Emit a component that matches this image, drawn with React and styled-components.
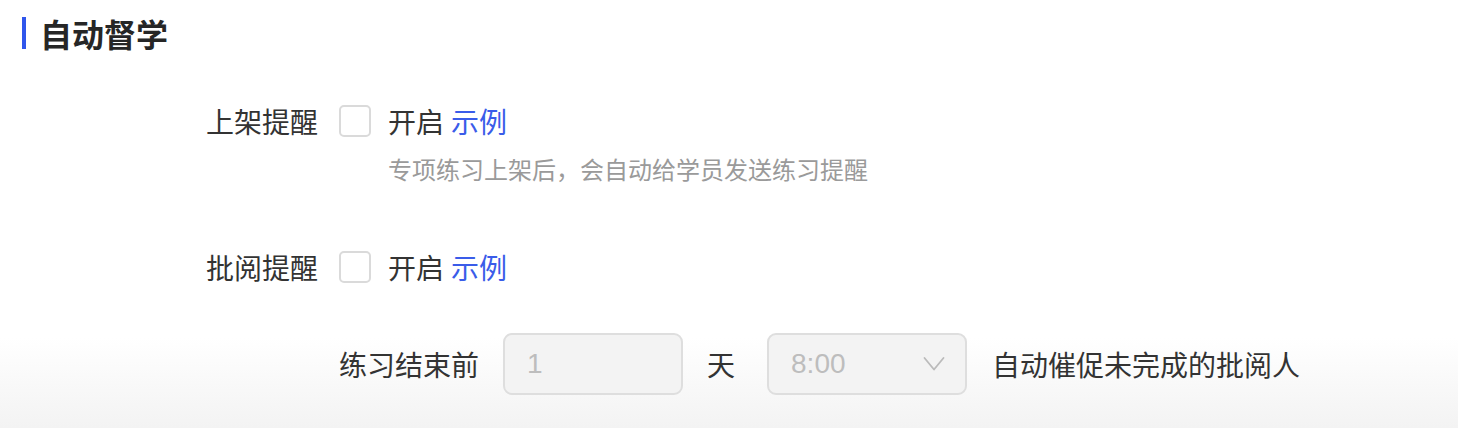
import React from "react";
import styled, { createGlobalStyle } from "styled-components";

const Global = createGlobalStyle`
  html, body { margin: 0; padding: 0; background: #fff; }
  body { font-family: "Noto Sans CJK SC", "Noto Sans", sans-serif; }
`;

const Page = styled.div`
  min-height: 428px;
  box-sizing: border-box;
  padding-top: 17px;
  background: linear-gradient(180deg, #ffffff 0, #ffffff 338px, #f3f3f3 428px);
  color: #333;
`;

const Header = styled.div`
  display: flex;
  align-items: center;
  gap: 14px;
  height: 32px;
  padding-left: 22px;
`;

const Bar = styled.span`
  width: 4px;
  height: 32px;
  background: #3056ec;
`;

const Title = styled.h2`
  margin: 0;
  font-size: 32px;
  font-weight: 700;
  line-height: 32px;
  color: #262626;
`;

const Form = styled.div`
  display: flex;
  flex-direction: column;
`;

const Row = styled.div`
  display: flex;
  align-items: center;
  height: ${(p) => p.$h || 40}px;
  margin-top: ${(p) => p.$mt || 0}px;
  padding-left: ${(p) => p.$indent || 0}px;
`;

const Label = styled.div`
  width: 318px;
  text-align: right;
  font-size: 28px;
  line-height: 40px;
  color: #333;
  flex-shrink: 0;
`;

const Check = styled.span`
  width: 32px;
  height: 32px;
  box-sizing: border-box;
  border: 2px solid #dadada;
  border-radius: 5px;
  background: #fff;
  margin-left: 21px;
  margin-right: 17px;
  flex-shrink: 0;
`;

const Text = styled.span`
  font-size: 28px;
  line-height: 40px;
  color: #333;
  white-space: nowrap;
  margin-right: ${(p) => p.$mr || 0}px;
`;

const Link = styled.a`
  font-size: 28px;
  line-height: 40px;
  color: #3a5ce9;
  text-decoration: none;
  margin-left: 7px;
`;

const Hint = styled.div`
  margin-top: 10px;
  padding-left: 388px;
  font-size: 24px;
  line-height: 36px;
  color: #9a9a9a;
`;

const Field = styled.div`
  display: flex;
  align-items: center;
  justify-content: space-between;
  box-sizing: border-box;
  width: ${(p) => p.$w}px;
  height: 62px;
  padding: 0 20px 0 22px;
  border: 2px solid #dedede;
  border-radius: 9px;
  background: #f3f3f3;
  font-family: "Liberation Sans", Arial, sans-serif;
  font-size: 28px;
  color: #bdbdbd;
  margin-right: ${(p) => p.$mr || 0}px;
  flex-shrink: 0;
`;

const Chevron = () => (
  <svg width="22" height="16" viewBox="0 0 22 16" fill="none">
    <path d="M1.5 2 L11 13.5 L20.5 2" stroke="#bbbbbb" strokeWidth="1.8" strokeLinecap="round" strokeLinejoin="round" />
  </svg>
);

export default function App() {
  return (
    <>
      <Global />
      <Page>
        <Header>
          <Bar />
          <Title>自动督学</Title>
        </Header>
        <Form>
          <Row $mt={52}>
            <Label>上架提醒</Label>
            <Check />
            <Text>开启</Text>
            <Link>示例</Link>
          </Row>
          <Hint>专项练习上架后，会自动给学员发送练习提醒</Hint>
          <Row $mt={60}>
            <Label>批阅提醒</Label>
            <Check />
            <Text>开启</Text>
            <Link>示例</Link>
          </Row>
          <Row $mt={46} $h={62} $indent={339}>
            <Text $mr={24}>练习结束前</Text>
            <Field $w={180} $mr={24}>1</Field>
            <Text $mr={32}>天</Text>
            <Field $w={200} $mr={25}>
              <span>8:00</span>
              <Chevron />
            </Field>
            <Text>自动催促未完成的批阅人</Text>
          </Row>
        </Form>
      </Page>
    </>
  );
}
